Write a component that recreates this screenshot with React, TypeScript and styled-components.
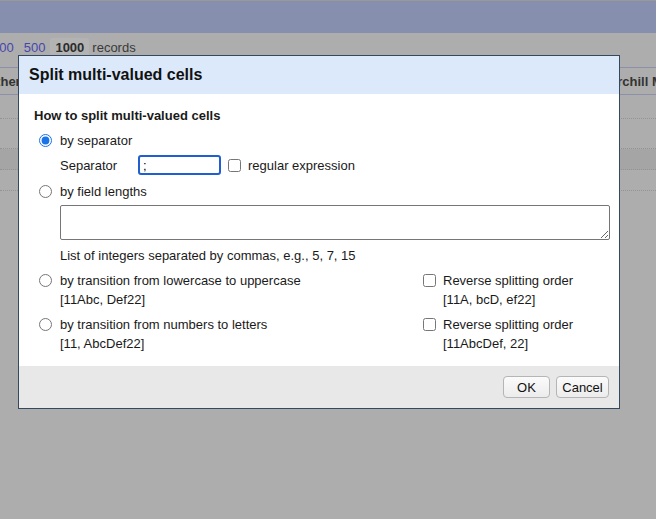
import styled, { createGlobalStyle } from 'styled-components';

const GlobalStyle = createGlobalStyle`
  html, body {
    margin: 0;
    padding: 0;
  }
  body {
    font-family: "Liberation Sans", Arial, sans-serif;
    font-size: 13px;
    color: #111;
  }
`;

const Page = styled.div`
  position: relative;
  width: 656px;
  height: 519px;
  overflow: hidden;
  background: #adadad;
  display: flex;
  flex-direction: column;
`;

const TopBar = styled.div`
  height: 32px;
  border-top: 1px solid #999;
  background: #8690ae;
`;

const Pager = styled.div`
  box-sizing: border-box;
  height: 34px;
  padding-bottom: 6px;
  display: flex;
  align-items: center;
  margin-left: -13px;
  font-size: 13px;
  color: #3a3a3a;
  white-space: nowrap;
`;

const PageLink = styled.span<{ $current?: boolean }>`
  padding: 2px 5px;
  border-radius: 2px;
  color: ${(p) => (p.$current ? '#2c2c2c' : '#4646b0')};
  font-weight: ${(p) => (p.$current ? 700 : 400)};
  background: ${(p) => (p.$current ? '#b3b3b3' : 'transparent')};
`;

const Records = styled.span`
  margin-left: 3px;
`;

const TableHead = styled.div`
  height: 26px;
  border-top: 1px solid #8c90a8;
  border-bottom: 1px solid #8c90a8;
  display: flex;
  align-items: center;
  font-weight: 700;
  color: #333;
  white-space: nowrap;
`;

const HeadCell = styled.span<{ $w?: number; $shift?: number }>`
  flex-shrink: 0;
  width: ${(p) => (p.$w ? `${p.$w}px` : 'auto')};
  margin-left: ${(p) => p.$shift ?? 0}px;
`;

const Row = styled.div<{ $h: number; $dark?: boolean }>`
  height: ${(p) => p.$h}px;
  border-bottom: 1px dotted #939393;
  background: ${(p) => (p.$dark ? '#a5a5a5' : 'transparent')};
`;

const Dialog = styled.div`
  position: absolute;
  left: 18px;
  top: 55px;
  width: 600px;
  border: 1px solid #34495e;
  background: #fff;
`;

const DialogHeader = styled.div`
  height: 38px;
  background: #dbe9fa;
  display: flex;
  align-items: center;
  padding-left: 10px;
  font-size: 16px;
  font-weight: 700;
  color: #111;
`;

const DialogBody = styled.div`
  padding: 14px 8px 14px 15px;
  display: flex;
  flex-direction: column;
  color: #1a1a1a;
`;

const Heading = styled.div`
  font-weight: 700;
  line-height: 16px;
  margin-bottom: 6px;
`;

const Line = styled.label<{ $mt?: number }>`
  display: flex;
  align-items: center;
  height: 20px;
  margin-top: ${(p) => p.$mt ?? 0}px;
`;

const Radio = styled.input.attrs({ type: 'radio' })`
  width: 13px;
  height: 13px;
  margin: 0 8px 0 5px;
  accent-color: #1a73e8;
`;

const Check = styled.input.attrs({ type: 'checkbox' })`
  width: 13px;
  height: 13px;
  margin: 0 7px 0 0;
`;

const Indent = styled.div<{ $mt?: number }>`
  padding-left: 26px;
  margin-top: ${(p) => p.$mt ?? 0}px;
  display: flex;
  align-items: center;
`;

const FieldLabel = styled.span`
  width: 78px;
`;

const SepInput = styled.input`
  box-sizing: border-box;
  width: 83px;
  height: 20px;
  padding: 0 3px;
  border: 2px solid #1f5fcf;
  border-radius: 3px;
  font-family: inherit;
  font-size: 13px;
  margin-right: 7px;
  outline: none;
`;

const LengthsArea = styled.textarea`
  box-sizing: border-box;
  width: 550px;
  height: 35px;
  border: 1px solid #767676;
  border-radius: 2px;
  resize: both;
  font-family: inherit;
`;

const Hint = styled.div`
  padding-left: 26px;
  line-height: 20px;
  margin-top: 6px;
`;

const SplitRow = styled.div<{ $mt: number }>`
  display: grid;
  grid-template-columns: 389px 1fr;
  margin-top: ${(p) => p.$mt}px;
`;

const Col = styled.div`
  display: flex;
  flex-direction: column;
`;

const Example = styled.div<{ $pad: number }>`
  padding-left: ${(p) => p.$pad}px;
  line-height: 19px;
  height: 18px;
`;

const Footer = styled.div`
  height: 42px;
  background: #e8e8e8;
  display: flex;
  align-items: center;
  justify-content: flex-end;
  gap: 6px;
  padding-right: 10px;
`;

const Button = styled.button<{ $w: number }>`
  width: ${(p) => p.$w}px;
  height: 22px;
  border: 1px solid #b5b5b5;
  border-radius: 4px;
  background: linear-gradient(#fbfbfb, #ececec);
  font-family: inherit;
  font-size: 13px;
  color: #111;
  padding: 0;
`;

type Transition = {
  label: string;
  example: string;
  reverseExample: string;
  mt: number;
};

const transitions: Transition[] = [
  {
    label: 'by transition from lowercase to uppercase',
    example: '[11Abc, Def22]',
    reverseExample: '[11A, bcD, ef22]',
    mt: 4,
  },
  {
    label: 'by transition from numbers to letters',
    example: '[11, AbcDef22]',
    reverseExample: '[11AbcDef, 22]',
    mt: 6,
  },
];

const App = () => {
  return (
    <Page>
      <GlobalStyle />
      <TopBar />
      <Pager>
        <PageLink>100</PageLink>
        <PageLink>500</PageLink>
        <PageLink $current>1000</PageLink>
        <Records>records</Records>
      </Pager>
      <TableHead>
        <HeadCell $w={606} $shift={-14}>
          Other
        </HeadCell>
        <HeadCell>Churchill Mobile</HeadCell>
      </TableHead>
      <Row $h={23} />
      <Row $h={29} />
      <Row $h={20} $dark />
      <Row $h={20} />

      <Dialog>
        <DialogHeader>Split multi-valued cells</DialogHeader>
        <DialogBody>
          <Heading>How to split multi-valued cells</Heading>
          <Line>
            <Radio name="mode" defaultChecked />
            by separator
          </Line>
          <Indent $mt={5}>
            <FieldLabel>Separator</FieldLabel>
            <SepInput defaultValue=";" />
            <Check />
            regular expression
          </Indent>
          <Line $mt={6}>
            <Radio name="mode" />
            by field lengths
          </Line>
          <Indent $mt={4}>
            <LengthsArea />
          </Indent>
          <Hint>List of integers separated by commas, e.g., 5, 7, 15</Hint>

          {transitions.map((t) => (
            <SplitRow key={t.label} $mt={t.mt}>
              <Col>
                <Line>
                  <Radio name="mode" />
                  {t.label}
                </Line>
                <Example $pad={26}>{t.example}</Example>
              </Col>
              <Col>
                <Line>
                  <Check />
                  Reverse splitting order
                </Line>
                <Example $pad={20}>{t.reverseExample}</Example>
              </Col>
            </SplitRow>
          ))}
        </DialogBody>
        <Footer>
          <Button $w={47}>OK</Button>
          <Button $w={53}>Cancel</Button>
        </Footer>
      </Dialog>
    </Page>
  );
};

export default App;
